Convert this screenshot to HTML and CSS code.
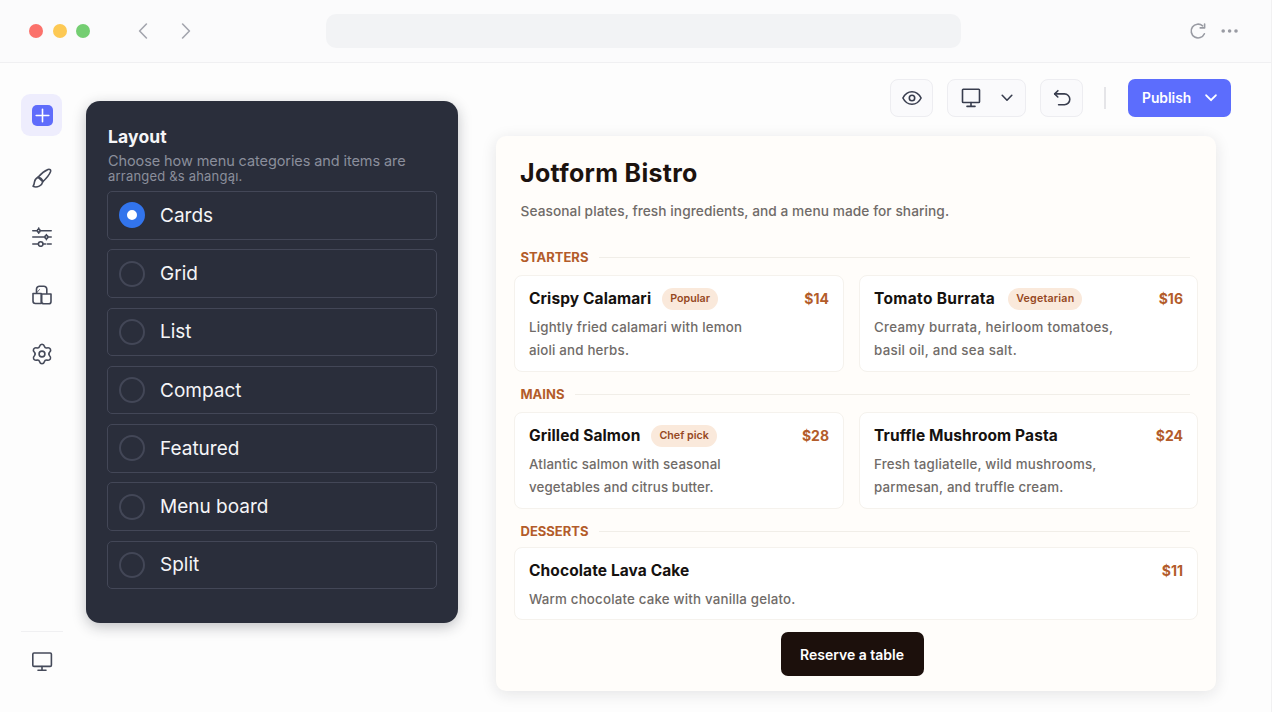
FILE: index.html
```html
<!DOCTYPE html>
<html lang="en">
<head>
<meta charset="utf-8">
<title>Jotform Bistro</title>
<link rel="stylesheet" href="styles.css">
</head>
<body>
<div class="window">
  <header class="chrome">
    <div class="lights"><span class="light red"></span><span class="light yellow"></span><span class="light green"></span></div>
    <div class="history">
      <svg width="10" height="16" viewBox="0 0 10 16"><path d="M8.4 1 1.6 8l6.8 7"/></svg>
      <svg width="10" height="16" viewBox="0 0 10 16"><path d="M1.6 1l6.8 7-6.8 7"/></svg>
    </div>
    <div class="address"></div>
    <div class="chrome-actions">
      <svg width="18" height="18" viewBox="0 0 18 18"><path d="M13.6 3.800A6.900 6.900 0 1 0 15.400 11.800"/><path d="M11.200 5.900 15.600 5.900 15.600 2"/></svg>
      <svg class="dots" width="18" height="6" viewBox="0 0 18 6"><circle cx="2.2" cy="3" r="1.8"/><circle cx="8.6" cy="3" r="1.8"/><circle cx="15" cy="3" r="1.8"/></svg>
    </div>
  </header>
  <div class="workspace">
    <nav class="rail">
      <button class="rail-item active"><span class="plus"><svg width="15" height="15" viewBox="0 0 15 15"><path d="M7.5 1.2v12.6M1.2 7.5h12.6"/></svg></span></button>
      <button class="rail-item"><svg width="20" height="20" viewBox="0 0 20 20"><path d="M6 9.200C9 5.700 12.600 2.800 16 1.400c1.800-.7 3.100.6 2.500 2.300-1.300 3.300-4.300 6.800-7.700 9.900z"/><path d="M6 9.200c-2 1-3.200 2.500-3.500 4.600-.2 1.600-.5 3.100-1.400 4.500 1.700.9 4.100.8 6.200-.2 1.900-.9 3.100-2.500 3.500-4.500-.5-2.400-2.300-4.100-4.800-4.400z"/></svg></button>
      <button class="rail-item"><svg width="20" height="20" viewBox="0 0 20 20"><path d="M.8 3.700h4.500M8.300 3.700H19.200M.8 10h12M16 10h3.200M.8 17h5.500M11 17h2.500M15.300 17h3.900"/><circle cx="6.700" cy="3.700" r="1.400"/><path d="M6.700 1v1M6.700 5.300v1M14.400 7.500v1M14.400 11.500v1.300"/><circle cx="14.400" cy="10" r="1.500"/><circle cx="8.700" cy="17" r="2.300"/></svg></button>
      <button class="rail-item"><svg width="20" height="20" viewBox="0 0 20 20"><path d="M4.500 7.500V4.300A3 3 0 0 1 7.500 1.200h4.300a3 3 0 0 1 3 3.100V8.500"/><path d="M1 8.500h8.200v10H3.400A2.400 2.400 0 0 1 1 16.100z"/><path d="M10.600 9H19v7.400a2.400 2.400 0 0 1-2.400 2.400h-4.500a2.400 2.400 0 0 1-2.400-2.400V9z"/><path class="fine" d="M7.500 4.500 4.500 8"/></svg></button>
      <button class="rail-item"><svg width="22" height="22" viewBox="-.5 0 22 22"><path d="M10.500 1.200c1.600 0 2.100.9 2.500 2.300.3 1.100 1.200 1.600 2.300 1.400 1.500-.4 2.800-.3 3.600 1.200.7 1.300.2 2.200-.8 3.200-.9 1-.9 2.400 0 3.400 1 1 1.500 1.900.8 3.200-.8 1.500-2.100 1.600-3.600 1.200-1.100-.2-2 .3-2.300 1.400-.4 1.400-.9 2.300-2.500 2.300s-2.100-.9-2.500-2.300c-.3-1.100-1.200-1.600-2.300-1.400-1.500.4-2.800.3-3.600-1.200-.7-1.300-.2-2.200.8-3.200.9-1 .9-2.400 0-3.400-1-1-1.500-1.900-.8-3.200.8-1.500 2.100-1.600 3.600-1.200 1.100.2 2-.3 2.300-1.400.4-1.400.9-2.300 2.500-2.300z"/><circle cx="10.500" cy="11" r="2.900"/></svg></button>
      <div class="rail-foot"><svg width="22" height="22" viewBox="0 0 22 22"><rect x="1.800" y="2" width="18.600" height="13.400" rx="1.200"/><path d="M11 15.600v3.200M7 19.200h8"/></svg></div>
    </nav>
    <aside class="panel">
      <h2>Layout</h2>
      <p class="hint">Choose how menu categories and items are</p>
      <p class="hint second">arranged &amp;s ahangąı.</p>
      <div class="options">
        <label class="option selected"><span class="radio"></span>Cards</label>
        <label class="option"><span class="radio"></span>Grid</label>
        <label class="option"><span class="radio"></span>List</label>
        <label class="option"><span class="radio"></span>Compact</label>
        <label class="option"><span class="radio"></span>Featured</label>
        <label class="option"><span class="radio"></span>Menu board</label>
        <label class="option"><span class="radio"></span>Split</label>
      </div>
    </aside>
    <main class="stage">
      <div class="toolbar">
        <button class="tool"><svg width="20" height="16" viewBox="0 0 20 16"><path d="M.900 8C5.200-.400 14.800-.400 19.100 8 14.800 16.400 5.200 16.400.900 8z"/><circle cx="10" cy="8" r="2.700"/></svg></button>
        <button class="tool device"><svg width="20" height="20" viewBox="0 0 20 20"><rect x="1.500" y="1.300" width="17" height="13.200" rx=".8"/><path d="M10 14.500v3.500M6 18.400h8"/></svg><svg width="12" height="8" viewBox="0 0 12 8"><path d="M1.200 1.300l4.800 4.900 4.800-4.900"/></svg></button>
        <button class="tool"><svg width="18" height="18" viewBox="0 0 18 18"><path d="M1.700 4.900h9.700a5.200 5.200 0 0 1 0 10.800H5.600"/><path d="M4.900 1.700 1.700 4.900l3.100 3.100"/></svg></button>
        <span class="divider"></span>
        <button class="publish"><span>Publish</span><svg width="12" height="8" viewBox="0 0 12 8"><path d="M1.200 1.300l4.800 4.900 4.800-4.900"/></svg></button>
      </div>
      <section class="menu">
        <h1>Jotform Bistro</h1>
        <p class="tagline">Seasonal plates, fresh ingredients, and a menu made for sharing.</p>
        <h3 class="group"><span>STARTERS</span></h3>
        <div class="cards">
          <article class="card">
            <div class="head"><h4>Crispy Calamari</h4><span class="tag">Popular</span><b class="price">$14</b></div>
            <p>Lightly fried calamari with lemon<br>aioli and herbs.</p>
          </article>
          <article class="card">
            <div class="head"><h4 class="wide">Tomato Burrata</h4><span class="tag roomy">Vegetarian</span><b class="price">$16</b></div>
            <p class="loose">Creamy burrata, heirloom tomatoes,<br>basil oil, and sea salt.</p>
          </article>
        </div>
        <h3 class="group"><span>MAINS</span></h3>
        <div class="cards">
          <article class="card">
            <div class="head"><h4>Grilled Salmon</h4><span class="tag">Chef pick</span><b class="price">$28</b></div>
            <p class="snug">Atlantic salmon with seasonal<br>vegetables and citrus butter.</p>
          </article>
          <article class="card">
            <div class="head"><h4>Truffle Mushroom Pasta</h4><b class="price">$24</b></div>
            <p>Fresh tagliatelle, wild mushrooms,<br>parmesan, and truffle cream.</p>
          </article>
        </div>
        <h3 class="group"><span>DESSERTS</span></h3>
        <div class="cards single">
          <article class="card">
            <div class="head"><h4>Chocolate Lava Cake</h4><b class="price">$11</b></div>
            <p>Warm chocolate cake with vanilla gelato.</p>
          </article>
        </div>
        <button class="reserve">Reserve a table</button>
      </section>
    </main>
  </div>
</div>
</body>
</html>
```
FILE: styles.css
```css
* { box-sizing: border-box; }
body { margin: 0; background: #fff; font-family: Inter, "Liberation Sans", sans-serif; }
h1, h2, h3, h4, p { margin: 0; }
button { font: inherit; border: 0; background: none; padding: 0; }
svg { display: block; fill: none; stroke: currentColor; stroke-width: 1.6; stroke-linecap: round; stroke-linejoin: round; flex: none; }

.window { width: 1272px; height: 712px; overflow: hidden; background: #fdfdfd; border-right: 1px solid #f1f1f2; display: flex; flex-direction: column; }
.chrome { height: 63px; flex: none; background: #fbfbfc; border-bottom: 1.500px solid #f0f0f2; display: flex; align-items: center; padding: 0 32px 0 29px; color: #a3a5ae; }
.lights { display: flex; gap: 9.500px; }
.light { width: 14px; height: 14px; border-radius: 50%; }
.red { background: #fb716b; }
.yellow { background: #fdc954; }
.green { background: #74ce72; }
.history { display: flex; gap: 33px; margin-left: 48px; }
.address { width: 635px; height: 34px; border-radius: 10px; background: #f2f3f5; margin-left: 135px; }
.chrome-actions { display: flex; align-items: center; gap: 14px; margin-left: auto; color: #999ba3; }
.dots { fill: currentColor; stroke: none; }

.workspace { flex: 1; display: flex; min-height: 0; }
.rail { width: 86px; padding: 31px 0 0 21px; display: flex; flex-direction: column; align-items: flex-start; color: #454a5a; }
.rail-item { width: 42px; height: 42px; margin-bottom: 16.600px; border-radius: 9px; display: grid; place-items: center; color: inherit; }
.rail-item.active { width: 41px; padding-left: 1px; background: #eeedfd; margin-bottom: 21px; }
.fine { stroke-width: .8; }
.plus { width: 21px; height: 21px; border-radius: 5px; background: #5f6cfb; color: #fff; display: grid; place-items: center; }
.rail-foot { width: 42px; height: 81px; margin-top: auto; border-top: 1px solid #f0f0f2; padding: 19px 0 0 10px; }

.panel { width: 372px; height: 522px; margin-top: 38px; padding: 25px 21px 0; border-radius: 14px; background: #2a2e3b; box-shadow: 0 4px 14px rgba(30, 32, 45, .27); color: #f5f5f7; }
.panel h2 { font-size: 17.500px; line-height: 22px; font-weight: 700; padding-left: 1px; letter-spacing: .15px; }
.hint { font-size: 14.500px; line-height: 18px; padding: 4px 0 0 1px; color: #8b8e9b; white-space: nowrap; letter-spacing: -.09px; }
.hint.second { line-height: 12px; padding-top: 0; font-size: 13px; letter-spacing: .2px; }
.options { display: grid; gap: 9.750px; margin-top: 9px; }
.option { height: 48.500px; border: 1px solid #434757; border-radius: 5px; display: flex; align-items: center; gap: 15px; padding-left: 11px; font-size: 19px; }
.radio { width: 26px; height: 26px; border: 2px solid #434757; border-radius: 50%; }
.selected .radio { border: 8px solid #3274ec; background: #fff; }

.stage { margin-left: 38px; width: 735px; padding-top: 16px; }
.toolbar { display: flex; justify-content: flex-end; align-items: center; height: 38px; color: #383d4e; }
.tool { width: 43px; height: 38px; border: 1px solid #ededf1; border-radius: 8px; background: #fafafc; display: flex; align-items: center; justify-content: center; margin-right: 14px; color: inherit; }
.tool.device { width: 79px; gap: 20px; }
.divider { width: 2px; height: 22px; background: #e5e5e8; margin: 0 22px 0 7px; }
.publish { width: 103px; height: 38px; border-radius: 7px; background: #5c6dfd; color: #fff; display: flex; align-items: center; justify-content: space-between; padding: 0 14px 0 14px; font-size: 13.800px; font-weight: 600; }
.publish svg { stroke-width: 1.900; }

.menu { width: 720px; height: 555px; margin-top: 19px; padding: 20px 18px 0; border-radius: 10px; background: #fffdfa; box-shadow: 0 3px 16px rgba(30, 30, 40, .11); display: flex; flex-direction: column; }
.menu h1 { font-size: 25px; line-height: 34px; font-weight: 700; padding-left: 6px; color: #1c120e; letter-spacing: .3px; }
.tagline { font-size: 13.700px; font-weight: 500; line-height: 20px; padding: 11px 0 0 6.500px; color: #706b68; white-space: nowrap; letter-spacing: .065px; }
.group { height: 22px; display: flex; align-items: center; gap: 11px; padding: 0 8px 0 6.500px; font-size: 13px; font-weight: 700; color: #b35c2a; }
.group::after { content: ""; flex: 1; height: 1px; background: #f1eee8; }
.tagline + .group { margin-top: 25px; }
.cards { display: grid; grid-template-columns: 330px 339px; gap: 15px; margin-top: 7px; margin-bottom: 11px; }
.cards.single { grid-template-columns: 1fr; margin-top: 5px; margin-bottom: 12px; }
.card { height: 97px; background: #fff; border: 1px solid #f5f2ed; border-radius: 8px; padding: 11px 14px 0; }
.single .card { height: 73px; }
.head { display: flex; align-items: center; height: 23px; }
.head h4 { font-size: 15.500px; font-weight: 700; color: #15110f; letter-spacing: .1px; }
.head h4.wide { letter-spacing: .32px; }
.tag { margin-left: 11px; height: 22px; border-radius: 11px; background: #fae9db; color: #96481f; font-size: 10.700px; font-weight: 600; line-height: 22px; padding: 0 8px; }
.tag.roomy { margin-left: 13px; letter-spacing: .2px; }
.price { margin-left: auto; font-size: 14px; color: #b35c2a; }
.card p { font-size: 13.300px; font-weight: 500; line-height: 23px; padding-top: 6px; color: #706b68; white-space: nowrap; letter-spacing: .19px; }
.card p.snug { letter-spacing: .12px; }
.card p.loose { letter-spacing: .3px; }
.reserve { align-self: center; margin-right: 8px; width: 143px; height: 44px; border-radius: 7px; background: #1c100c; color: #fff; font-size: 14px; font-weight: 600; }
```
